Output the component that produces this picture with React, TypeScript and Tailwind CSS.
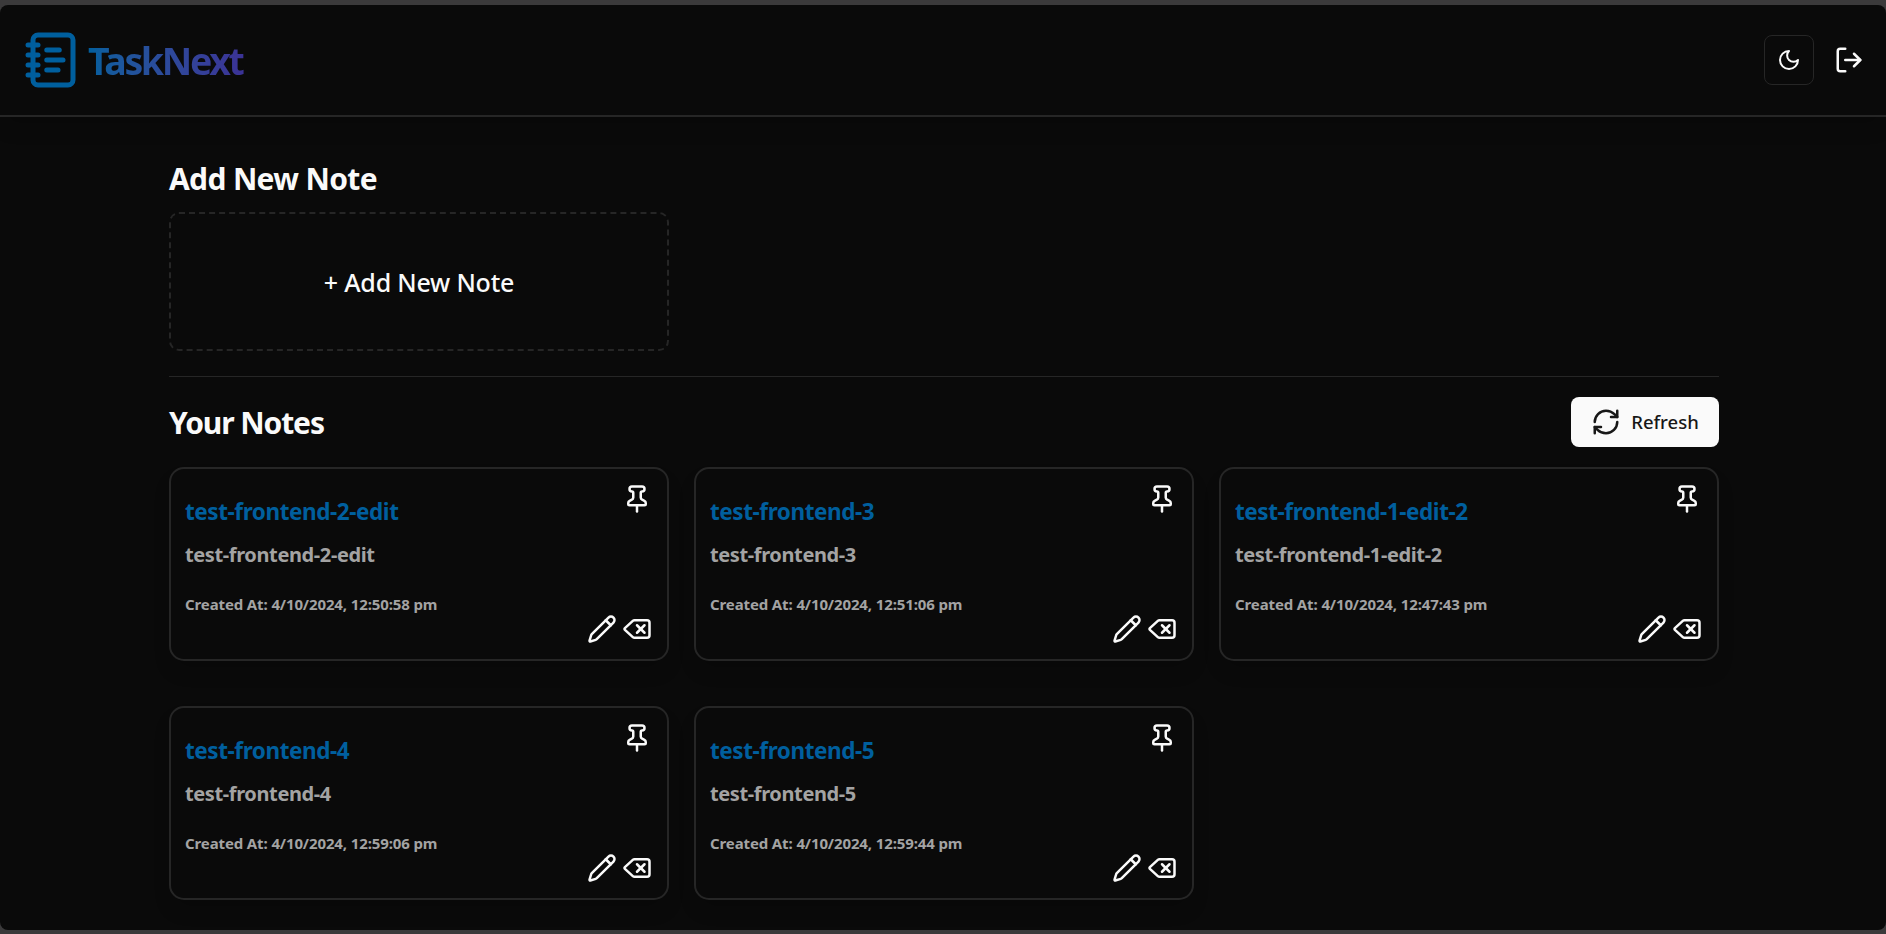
import { NotebookText, LogOut, RefreshCw, Pin, Pencil, Delete } from "lucide-react";

interface Note {
  title: string;
  time: string;
}

const notes: Note[] = [
  { title: "test-frontend-2-edit", time: "12:50:58" },
  { title: "test-frontend-3", time: "12:51:06" },
  { title: "test-frontend-1-edit-2", time: "12:47:43" },
  { title: "test-frontend-4", time: "12:59:06" },
  { title: "test-frontend-5", time: "12:59:44" },
];

function MoonIcon() {
  return (
    <svg width="24" height="24" viewBox="0 0 24 24" fill="none" stroke="currentColor" strokeWidth="2" strokeLinecap="round" strokeLinejoin="round">
      <path d="M12 3a6 6 0 0 0 9 9 9 9 0 1 1-9-9Z" />
    </svg>
  );
}

function NoteCard({ note }: { note: Note }) {
  return (
    <article className="flex h-[194px] justify-between rounded-[15px] border-2 border-[#262626] bg-[#0a0a0a] pr-[15px] pl-[14px] shadow-[0_12px_19px_-4px_rgba(0,0,0,0.18)]">
      <div className="flex flex-col pt-[25px] font-bold whitespace-nowrap">
        <h3 className="text-[22.5px] leading-[35px] tracking-[-0.42px] text-[#005f9e]">{note.title}</h3>
        <p className="mt-[11px] text-[20px] leading-[30px] tracking-[-0.38px] text-[#a3a3a3]">{note.title}</p>
        <p className="mt-[22px] text-[15px] leading-[25px] tracking-[-0.12px] text-[#a3a3a3]">Created At: 4/10/2024, {note.time} pm</p>
      </div>
      <div className="flex flex-col items-end justify-between pt-[15px] pb-[15px] text-[#fafafa]">
        <Pin size={30} />
        <div className="flex gap-[5px]">
          <Pencil size={30} />
          <Delete size={30} />
        </div>
      </div>
    </article>
  );
}

export default function App() {
  return (
    <div className="h-[934px] overflow-hidden bg-[#3b3a3b] pt-[5px] pb-[4px] font-['Noto_Sans',sans-serif] text-[#fafafa]">
      <div className="h-full overflow-hidden rounded-[8px] bg-[#0a0a0a]">
        <header className="flex h-[112px] items-center justify-between border-b-2 border-[#262626] pr-[22px] pl-[23px] shadow-[0_12px_19px_-4px_rgba(0,0,0,0.18)]">
          <div className="flex items-center gap-[5px] text-[#005f9e]">
            <NotebookText size={60} />
            <span className="bg-gradient-to-r from-[#005f9e] to-[#3b3296] bg-clip-text pt-[1px] pr-[3px] text-[37.5px] leading-[45px] font-bold tracking-[-2.35px] text-transparent">TaskNext</span>
          </div>
          <div className="flex items-center gap-[20px]">
            <button className="flex size-[50px] items-center justify-center rounded-[8px] border border-[#262626]">
              <MoonIcon />
            </button>
            <LogOut size={30} />
          </div>
        </header>
        <main className="ml-[169px] w-[1550px] pt-[39px]">
          <h2 className="text-[30px] leading-[45px] font-bold tracking-[-0.65px]">Add New Note</h2>
          <button className="mt-[11px] flex h-[139px] w-[500px] items-center justify-center rounded-[10px] border-2 border-dashed border-[#262626] pt-[2px] text-[25px] font-medium tracking-[-0.2px]">
            + Add New Note
          </button>
          <hr className="mt-[25px] border-[#262626]" />
          <div className="mt-[20px] flex h-[50px] items-center justify-between">
            <h2 className="text-[30px] leading-[45px] font-bold tracking-[-1.1px]">Your Notes</h2>
            <button className="flex h-[50px] w-[148px] items-center justify-center gap-[10px] rounded-[8px] bg-[#fafafa] text-[18.5px] font-medium text-[#171717]">
              <RefreshCw size={30} />
              Refresh
            </button>
          </div>
          <section className="mt-[20px] grid grid-cols-3 gap-x-[25px] gap-y-[45px]">
            {notes.map((note) => (
              <NoteCard key={note.title} note={note} />
            ))}
          </section>
        </main>
      </div>
    </div>
  );
}
